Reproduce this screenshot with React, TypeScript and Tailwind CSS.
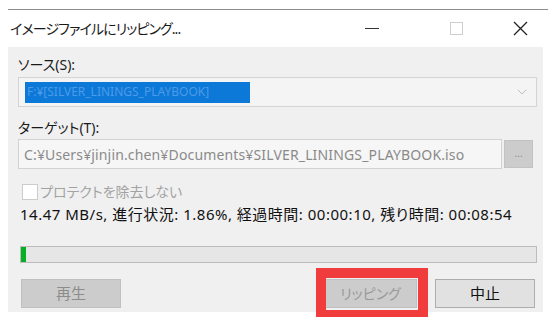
import { ChevronDown } from "lucide-react";

const FONT = "[font-family:'Noto_Sans','Noto_Sans_CJK_JP',sans-serif] [font-feature-settings:'palt']";

export default function App() {
  return (
    <div className={`relative w-[556px] h-[317px] bg-white overflow-hidden ${FONT}`}>
      {/* window top edge */}
      <div className="mt-[9px] ml-[8px] w-[540px] border-t border-[#8c8c8c]" />

      {/* title bar */}
      <div className="ml-[8px] w-[540px] h-[37px] flex items-center text-[#1a1a1a]">
        <span className="pl-[2px] text-[14px] tracking-[-0.9px]">イメージファイルにリッピング...</span>
        <div className="ml-auto flex items-center">
          <div className="w-[14px] h-[1.5px] bg-[#333] mr-[71px]" />
          <div className="w-[13px] h-[13px] border border-[#cfcfcf] mr-[50px]" />
          <svg width="15" height="15" viewBox="0 0 15 15" className="mr-[20px]">
            <path d="M1 1 L14 14 M14 1 L1 14" stroke="#222" strokeWidth="1.3" />
          </svg>
        </div>
      </div>

      {/* body */}
      <div className="ml-[8px] w-[535px] h-[265px] bg-[#f0f0f0] px-[10px] pt-[9px] flex flex-col">
        <div className="text-[14px] text-[#1a1a1a] leading-[18px]">ソース(S):</div>
        <div className="mt-[3px] h-[30px] w-[519px] border border-[#d4d4d4] bg-[#f4f4f4] flex items-center pl-[6px] pr-[6px]">
          <div className="h-[21px] w-[225px] bg-[#0c78d8] flex items-center pl-[2px] text-[12px] text-[#4d9be6] overflow-hidden whitespace-nowrap">
            F:¥[SILVER_LININGS_PLAYBOOK]
          </div>
          <ChevronDown className="ml-auto text-[#b0b0b0]" size={16} strokeWidth={1.2} />
        </div>

        <div className="mt-[12px] text-[14px] text-[#1a1a1a] leading-[18px]">ターゲット(T):</div>
        <div className="mt-[2px] flex items-center gap-[2px]">
          <div className="h-[30px] w-[486px] border border-[#d2d2d2] bg-[#f6f6f6] flex items-center pl-[5px] text-[14px] tracking-[0.15px] text-[#8a8a8a] whitespace-nowrap overflow-hidden">
            C:¥Users¥jinjin.chen¥Documents¥SILVER_LININGS_PLAYBOOK.iso
          </div>
          <div className="h-[28px] w-[29px] bg-[#cccccc] border border-[#c2c2c2] flex items-center justify-center text-[10px] text-[#8f8f8f] leading-none pb-[3px]">
            ...
          </div>
        </div>

        <div className="mt-[14px] flex items-center gap-[2px] pl-[4px]">
          <div className="w-[16px] h-[16px] bg-white border border-[#cccccc]" />
          <span className="text-[14px] text-[#a3a3a3] leading-[18px]">プロテクトを除去しない</span>
        </div>

        <div className="mt-[4px] pl-[2px] text-[15px] tracking-[0.5px] text-[#111] leading-[18px] whitespace-nowrap">
          14.47 MB/s, 進行状況: 1.86%, 経過時間: 00:00:10, 残り時間: 00:08:54
        </div>

        <div className="mt-[23px] ml-[2px] h-[17px] w-[517px] bg-[#e6e6e6] border border-[#bcbcbc] flex">
          <div className="w-[5px] h-full bg-[#06b025]" />
        </div>

        <div className="mt-[16px] flex items-center">
          <div className="ml-[3px] w-[100px] h-[29px] bg-[#cccccc] border border-[#c0c0c0] flex items-center justify-center text-[15px] text-[#8c8c8c]">
            再生
          </div>
          <div className="ml-auto w-[93px] h-[29px] bg-[#cccccc] border border-[#c0c0c0] flex items-center justify-center text-[14px] text-[#9a9a9a]">
            リッピング
          </div>
          <div className="ml-[18px] mr-[-2px] w-[100px] h-[29px] bg-[#e1e1e1] border border-[#adadad] flex items-center justify-center text-[15px] text-[#111]">
            中止
          </div>
        </div>
      </div>

      {/* red highlight annotation */}
      <div className="absolute left-[316px] top-[268px] w-[112px] h-[52px] border-[10px] border-[#f03c3c]" />
    </div>
  );
}
